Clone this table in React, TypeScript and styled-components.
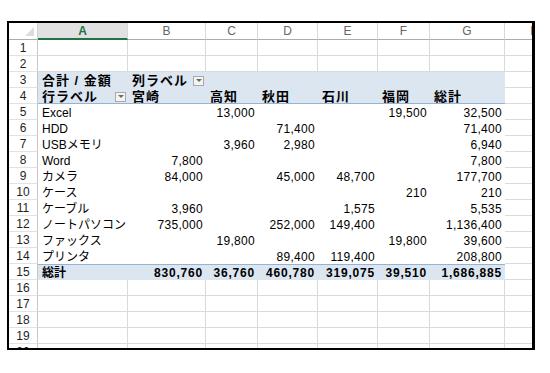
import React from "react";
import styled, { createGlobalStyle, css } from "styled-components";

const GlobalStyle = createGlobalStyle`
  html, body { margin: 0; padding: 0; background: #ffffff; }
  body { font-family: "Liberation Sans", "Noto Sans CJK JP", sans-serif; }
`;

const Frame = styled.div`
  margin: 21px 0 0 7px;
  width: 528px;
  height: 329px;
  box-sizing: border-box;
  border: 2px solid #000;
  border-right-width: 3px;
  overflow: hidden;
  background: #fff;
`;

const Sheet = styled.div`
  display: grid;
  grid-template-columns: 29px 90px 78px 52px 60px 60px 52px 75px 60px;
  grid-template-rows: 17px repeat(20, 16px);
  font-size: 12px;
  color: #000;
`;

const Corner = styled.div`
  position: relative;
  box-sizing: border-box;
  border-right: 1px solid #d4d4d4;
  border-bottom: 1px solid #ababab;
  background: #fff;
`;

const CornerTriangle = styled.span`
  position: absolute;
  right: 3px;
  bottom: 3px;
  width: 0;
  height: 0;
  border-left: 9px solid transparent;
  border-bottom: 9px solid #dcdcdc;
`;

const ColHeader = styled.div<{ $active?: boolean }>`
  box-sizing: border-box;
  display: flex;
  align-items: center;
  justify-content: center;
  border-right: 1px solid #d8d8d8;
  border-bottom: 1px solid #ababab;
  font-size: 12px;
  color: #666;
  background: #fff;
  ${(p) =>
    p.$active &&
    css`
      background: #e1e1e1;
      color: #217346;
      font-weight: bold;
      border-bottom: 2px solid #217346;
    `}
`;

const RowHeader = styled.div`
  box-sizing: border-box;
  display: flex;
  align-items: center;
  justify-content: center;
  padding-top: 2px;
  line-height: 13px;
  border-right: 1px solid #c8c8c8;
  border-bottom: 1px solid #e2e2e2;
  font-size: 12px;
  color: #1f1f1f;
  background: #fff;
`;

type Kind = "grid" | "pivot" | "band" | "total";

const Cell = styled.div<{ $kind: Kind; $right?: boolean; $bold?: boolean; $line?: boolean }>`
  box-sizing: border-box;
  display: flex;
  align-items: center;
  justify-content: ${(p) => (p.$right ? "flex-end" : "space-between")};
  padding: 2px 3px 0 4px;
  line-height: 13px;
  white-space: nowrap;
  overflow: hidden;
  letter-spacing: ${(p) => (p.$bold && p.$right ? "0.8px" : p.$right ? "0.3px" : "0")};
  font-weight: ${(p) => (p.$bold ? "bold" : "normal")};
  ${(p) =>
    p.$kind === "grid" &&
    css`
      border-right: 1px solid #dadada;
      border-bottom: 1px solid #dadada;
    `}
  ${(p) =>
    p.$kind === "band" &&
    css`
      background: #dce6f1;
      font-size: 13px;
      letter-spacing: 1px;
      border-bottom: 1px solid ${p.$line ? "#95b3d7" : "#dce6f1"};
    `}
  ${(p) =>
    p.$kind === "total" &&
    css`
      background: #dce6f1;
      padding-top: 1px;
      border-top: 1px solid #95b3d7;
    `}
`;

const DropButton = styled.span`
  box-sizing: border-box;
  width: 11px;
  height: 10px;
  border: 1px solid #a9a9a9;
  background: #f4f4f4;
  display: flex;
  align-items: center;
  justify-content: center;
  margin-right: -1px;
  flex: none;
`;

const Arrow = styled.span`
  width: 0;
  height: 0;
  border-left: 3px solid transparent;
  border-right: 3px solid transparent;
  border-top: 3px solid #6b6b6b;
`;

const Dropdown = () => (
  <DropButton>
    <Arrow />
  </DropButton>
);

const cols = ["A", "B", "C", "D", "E", "F", "G", "H"];

type Row = [string, string, string, string, string, string, string];

const dataRows: Row[] = [
  ["Excel", "", "13,000", "", "", "19,500", "32,500"],
  ["HDD", "", "", "71,400", "", "", "71,400"],
  ["USBメモリ", "", "3,960", "2,980", "", "", "6,940"],
  ["Word", "7,800", "", "", "", "", "7,800"],
  ["カメラ", "84,000", "", "45,000", "48,700", "", "177,700"],
  ["ケース", "", "", "", "", "210", "210"],
  ["ケーブル", "3,960", "", "", "1,575", "", "5,535"],
  ["ノートパソコン", "735,000", "", "252,000", "149,400", "", "1,136,400"],
  ["ファックス", "", "19,800", "", "", "19,800", "39,600"],
  ["プリンタ", "", "", "89,400", "119,400", "", "208,800"],
];

const totals: Row = ["総計", "830,760", "36,760", "460,780", "319,075", "39,510", "1,686,885"];
const regions = ["宮崎", "高知", "秋田", "石川", "福岡", "総計"];

const GridRow = ({ n }: { n: number }) => (
  <>
    <RowHeader>{n}</RowHeader>
    {cols.map((c) => (
      <Cell key={c} $kind="grid" />
    ))}
  </>
);

export default function App() {
  return (
    <>
      <GlobalStyle />
      <Frame>
        <Sheet>
          <Corner>
            <CornerTriangle />
          </Corner>
          {cols.map((c) => (
            <ColHeader key={c} $active={c === "A"}>
              {c}
            </ColHeader>
          ))}

          <GridRow n={1} />
          <GridRow n={2} />

          <RowHeader>3</RowHeader>
          <Cell $kind="band" $bold>
            合計 / 金額
          </Cell>
          <Cell $kind="band" $bold>
            列ラベル
            <Dropdown />
          </Cell>
          {[0, 1, 2, 3, 4].map((i) => (
            <Cell key={i} $kind="band" />
          ))}
          <Cell $kind="grid" />

          <RowHeader>4</RowHeader>
          <Cell $kind="band" $bold $line>
            行ラベル
            <Dropdown />
          </Cell>
          {regions.map((r) => (
            <Cell key={r} $kind="band" $bold $line>
              {r}
            </Cell>
          ))}
          <Cell $kind="grid" />

          {dataRows.map((row, i) => (
            <React.Fragment key={row[0]}>
              <RowHeader>{i + 5}</RowHeader>
              {row.map((v, j) => (
                <Cell key={j} $kind="pivot" $right={j > 0}>
                  {v}
                </Cell>
              ))}
              <Cell $kind="grid" />
            </React.Fragment>
          ))}

          <RowHeader>15</RowHeader>
          {totals.map((v, j) => (
            <Cell key={j} $kind="total" $bold $right={j > 0}>
              {v}
            </Cell>
          ))}
          <Cell $kind="grid" />

          {[16, 17, 18, 19, 20].map((n) => (
            <GridRow key={n} n={n} />
          ))}
        </Sheet>
      </Frame>
    </>
  );
}
